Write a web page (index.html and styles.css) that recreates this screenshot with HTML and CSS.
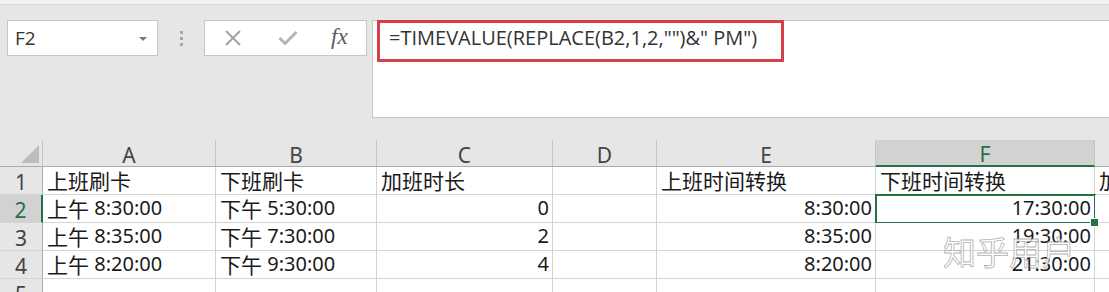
FILE: index.html
```html
<!DOCTYPE html>
<html lang="zh-CN">
<head>
<meta charset="utf-8">
<title>Excel TIMEVALUE</title>
<link rel="stylesheet" href="styles.css">
</head>
<body>
<div class="top-strip"></div>
<div class="toolbar">
  <div class="namebox"><span class="name">F2</span><span class="caret"></span></div>
  <div class="grip"><i></i><i></i><i></i></div>
  <div class="fnbox">
    <svg class="ico-x" width="18" height="18" viewBox="0 0 18 18"><path d="M2 2 L16 16 M16 2 L2 16" stroke="#a3a3a3" stroke-width="2" fill="none"/></svg>
    <svg class="ico-check" width="20" height="16" viewBox="0 0 20 16"><path d="M1.5 8 L7 13.5 L18.5 2" stroke="#b5b5b5" stroke-width="3" fill="none"/></svg>
    <span class="fx">fx</span>
  </div>
  <div class="formula"><div class="formula-hl">=TIMEVALUE(REPLACE(B2,1,2,"")&amp;" PM")</div></div>
</div>
<div class="sheet">
  <div class="hd corner"><span class="tri"></span></div>
  <div class="hd col">A</div>
  <div class="hd col">B</div>
  <div class="hd col">C</div>
  <div class="hd col">D</div>
  <div class="hd col">E</div>
  <div class="hd col sel">F</div>
  <div class="hd col"></div>

  <div class="hd row">1</div>
  <div class="c"><span class="zh">上班刷卡</span></div>
  <div class="c"><span class="zh">下班刷卡</span></div>
  <div class="c"><span class="zh">加班时长</span></div>
  <div class="c"></div>
  <div class="c"><span class="zh">上班时间转换</span></div>
  <div class="c"><span class="zh">下班时间转换</span></div>
  <div class="c"><span class="zh">加班时长</span></div>

  <div class="hd row rsel">2</div>
  <div class="c"><span class="zh">上午</span>&nbsp;8:30:00</div>
  <div class="c"><span class="zh">下午</span>&nbsp;5:30:00</div>
  <div class="c r">0</div>
  <div class="c"></div>
  <div class="c r">8:30:00</div>
  <div class="c r active">17:30:00</div>
  <div class="c"></div>

  <div class="hd row">3</div>
  <div class="c"><span class="zh">上午</span>&nbsp;8:35:00</div>
  <div class="c"><span class="zh">下午</span>&nbsp;7:30:00</div>
  <div class="c r">2</div>
  <div class="c"></div>
  <div class="c r">8:35:00</div>
  <div class="c r">19:30:00</div>
  <div class="c"></div>

  <div class="hd row">4</div>
  <div class="c"><span class="zh">上午</span>&nbsp;8:20:00</div>
  <div class="c"><span class="zh">下午</span>&nbsp;9:30:00</div>
  <div class="c r">4</div>
  <div class="c"></div>
  <div class="c r">8:20:00</div>
  <div class="c r">21:30:00</div>
  <div class="c"></div>

  <div class="hd row">5</div>
  <div class="c"></div>
  <div class="c"></div>
  <div class="c"></div>
  <div class="c"></div>
  <div class="c"></div>
  <div class="c"></div>
  <div class="c"></div>
</div>
<div class="watermark">知乎用户</div>
</body>
</html>
```

FILE: styles.css
```css
* { box-sizing: border-box; }
html, body { margin: 0; padding: 0; }
body {
  width: 1109px;
  height: 292px;
  overflow: hidden;
  background: #e6e6e6;
  position: relative;
  font-family: "Noto Sans", "Noto Sans CJK SC", sans-serif;
  color: #222;
}
.top-strip {
  height: 5px;
  background: #f3f3f3;
  border-bottom: 1px solid #d6d6d6;
}
.toolbar {
  display: flex;
  align-items: flex-start;
  padding: 15px 0 0 7px;
  height: 118px;
}
.namebox {
  width: 151px;
  height: 36px;
  background: #fff;
  border: 1px solid #c6c6c6;
  display: flex;
  align-items: center;
  justify-content: space-between;
  padding: 0 10px 0 7px;
}
.name {
  font-family: "Open Sans", "Noto Sans", sans-serif;
  font-size: 19px;
  color: #333;
}
.caret {
  width: 0; height: 0;
  border-left: 4px solid transparent;
  border-right: 4px solid transparent;
  border-top: 4px solid #7a7a7a;
  margin-top: 2px;
}
.grip {
  width: 46px;
  height: 36px;
  display: flex;
  flex-direction: column;
  align-items: center;
  justify-content: center;
  gap: 3px;
}
.grip i {
  display: block;
  width: 3px; height: 3px;
  background: #a8a8a8;
}
.fnbox {
  width: 163px;
  height: 36px;
  background: #fff;
  border: 1px solid #c6c6c6;
  display: flex;
  align-items: center;
  padding-left: 19px;
}
.ico-x { margin-right: 36px; }
.ico-check { margin-right: 33px; }
.fx {
  font-family: "Liberation Serif", serif;
  font-style: italic;
  font-size: 23px;
  color: #5a5a5a;
  margin-top: -3px;
}
.formula {
  flex: 1;
  margin-left: 5px;
  height: 98px;
  background: #fff;
  border: 1px solid #c6c6c6;
  border-right: none;
  padding: 0 0 0 4px;
}
.formula-hl {
  width: 407px;
  height: 42px;
  border: 3px solid #d6404a;
  margin-top: -1px;
  padding: 1px 0 0 9px;
  font-family: "Open Sans", "Noto Sans", sans-serif;
  font-size: 20px;
  color: #333;
  white-space: nowrap;
}
.sheet {
  margin-top: 17px;
  display: grid;
  grid-template-columns: 43px 173px 161px 176px 104px 219px 219px 200px;
  grid-template-rows: 27px 28px 28px 28px 28px 28px;
  width: 1303px;
}
.sheet > div {
  border-right: 1px solid #d4d4d4;
  border-bottom: 1px solid #d4d4d4;
  position: relative;
}
.hd {
  background: #e6e6e6;
  color: #444;
  font-size: 21px;
  display: flex;
  align-items: center;
  justify-content: center;
}
.hd.col {
  border-right-color: #c4c4c4 !important;
  border-bottom: 1px solid #ababab !important;
  padding-top: 3px;
}
.hd.corner {
  border-right-color: #c4c4c4 !important;
  border-bottom: 1px solid #ababab !important;
}
.tri {
  position: absolute;
  right: 3px;
  bottom: 3px;
  width: 0; height: 0;
  border-left: 18px solid transparent;
  border-bottom: 18px solid #bdbdbd;
}
.hd.col.sel {
  background: #d2d2d2;
  color: #217346;
  border-bottom: 2px solid #217346 !important;
}
.hd.row {
  border-right-color: #ababab !important;
  border-bottom-color: #d4d4d4;
  padding-top: 2px;
}
.hd.row.rsel {
  background: #d2d2d2;
  color: #217346;
  border-right: 2px solid #217346 !important;
}
.c {
  background: #fff;
  font-size: 20px;
  line-height: 24px;
  color: #1a1a1a;
  white-space: nowrap;
  display: flex;
  align-items: flex-end;
  padding: 0 3px 2px 4px;
  overflow: visible;
}
.zh {
  font-family: "Noto Sans CJK SC", sans-serif;
  font-size: 21px;
  line-height: 24px;
}
.c.r { justify-content: flex-end; }
.c.active::after {
  content: "";
  position: absolute;
  left: -1px; top: -1px; right: -2px; bottom: -2px;
  border: 2px solid #217346;
  pointer-events: none;
}
.c.active::before {
  content: "";
  position: absolute;
  right: -5px; bottom: -5px;
  width: 7px; height: 7px;
  background: #217346;
  border: 1px solid #fff;
  z-index: 2;
}
.watermark {
  position: absolute;
  left: 943px;
  top: 231px;
  font-family: "Noto Sans CJK SC", sans-serif;
  font-size: 33px;
  line-height: 40px;
  color: rgba(255, 255, 255, 0.8);
  -webkit-text-stroke: 0.8px rgba(140, 140, 140, 0.7);
}
```
